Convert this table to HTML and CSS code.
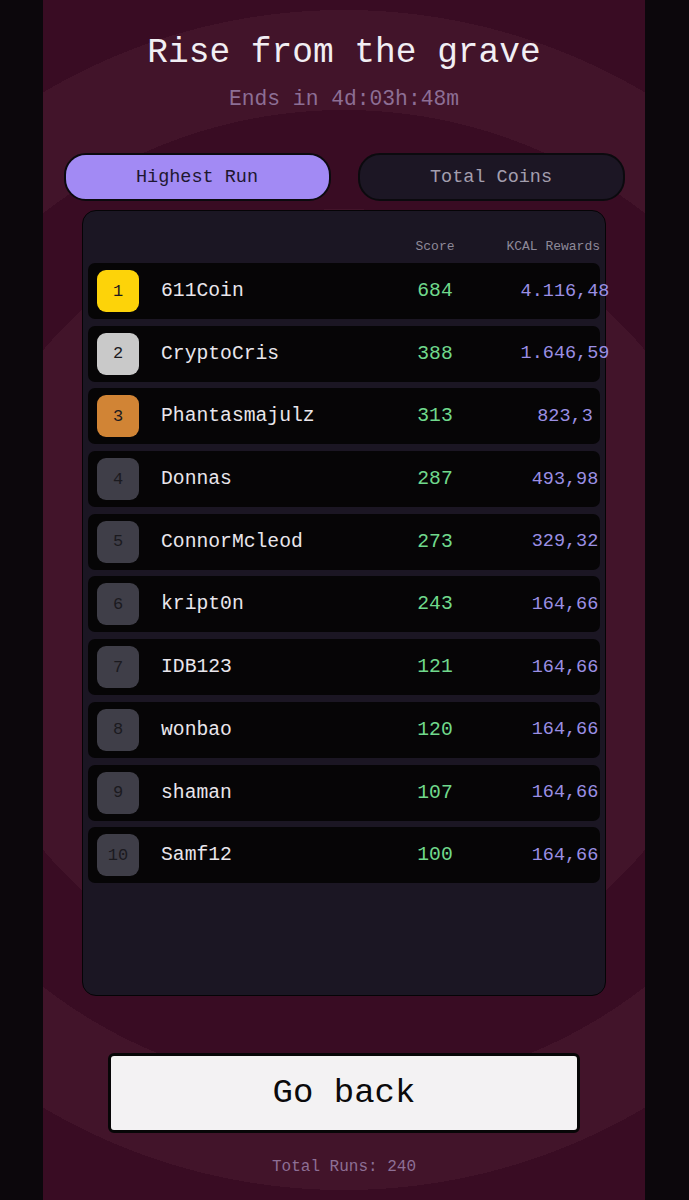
FILE: index.html
```html
<!DOCTYPE html>
<html>
<head>
<meta charset="utf-8">
<link rel="stylesheet" href="styles.css">
</head>
<body>
<main class="panel">
  <h1 class="title">Rise from the grave</h1>
  <p class="subtitle">Ends in 4d:03h:48m</p>
  <div class="tabs">
    <button class="tab tab-active">Highest Run</button>
    <button class="tab">Total Coins</button>
  </div>
  <section class="board">
    <div class="board-head">
      <span></span><span></span>
      <span class="h-score">Score</span>
      <span class="h-reward">KCAL Rewards</span>
    </div>
    <div class="rows">
      <div class="row"><span class="rank gold">1</span><span class="name">611Coin</span><span class="score">684</span><span class="reward">4.116,48</span></div>
      <div class="row"><span class="rank silver">2</span><span class="name">CryptoCris</span><span class="score">388</span><span class="reward">1.646,59</span></div>
      <div class="row"><span class="rank bronze">3</span><span class="name">Phantasmajulz</span><span class="score">313</span><span class="reward">823,3</span></div>
      <div class="row"><span class="rank">4</span><span class="name">Donnas</span><span class="score">287</span><span class="reward">493,98</span></div>
      <div class="row"><span class="rank">5</span><span class="name">ConnorMcleod</span><span class="score">273</span><span class="reward">329,32</span></div>
      <div class="row"><span class="rank">6</span><span class="name">kript0n</span><span class="score">243</span><span class="reward">164,66</span></div>
      <div class="row"><span class="rank">7</span><span class="name">IDB123</span><span class="score">121</span><span class="reward">164,66</span></div>
      <div class="row"><span class="rank">8</span><span class="name">wonbao</span><span class="score">120</span><span class="reward">164,66</span></div>
      <div class="row"><span class="rank">9</span><span class="name">shaman</span><span class="score">107</span><span class="reward">164,66</span></div>
      <div class="row"><span class="rank">10</span><span class="name">Samf12</span><span class="score">100</span><span class="reward">164,66</span></div>
    </div>
  </section>
  <button class="back">Go back</button>
  <p class="runs">Total Runs: 240</p>
</main>
</body>
</html>
```

FILE: styles.css
```css
* { box-sizing: border-box; }
html, body { margin: 0; padding: 0; }
body {
  background: #0c070c;
  font-family: "Liberation Mono", "Courier New", monospace;
  display: flex;
  justify-content: center;
  height: 1200px;
  overflow: hidden;
}
.panel {
  width: 602px;
  height: 1200px;
  margin-left: -1px;
  display: flex;
  flex-direction: column;
  align-items: center;
  background: radial-gradient(circle at 301px 600px,
    #42142a 0 391px,
    #390c23 391px 490px,
    #42142a 490px 590px,
    #390c23 590px);
}
.title {
  margin: 33px 0 0;
  font-size: 34.5px;
  line-height: 40px;
  font-weight: normal;
  color: #f1eef3;
}
.subtitle {
  margin: 13px 0 0;
  font-size: 21.3px;
  line-height: 26px;
  color: #8d6f95;
}
.tabs {
  margin-top: 41px;
  display: flex;
  gap: 27px;
}
.tab {
  width: 267px;
  height: 48px;
  border: 2px solid #0b0a0e;
  border-radius: 22px;
  background: #1c1624;
  color: #a39eae;
  font-family: inherit;
  font-size: 18.5px;
  padding: 0;
}
.tab-active {
  background: #a28af4;
  color: #1e1730;
}
.board {
  margin-top: 9px;
  width: 524px;
  height: 786px;
  background: #1b1623;
  border: 1px solid #050406;
  border-radius: 14px;
  padding: 28px 5px 0;
}
.board-head, .row {
  display: grid;
  grid-template-columns: 42px 1fr 70px 130px;
  align-items: center;
  padding-left: 9px;
}
.board-head {
  font-size: 13px;
  line-height: 16px;
  color: #8e8999;
  height: 16px;
  margin-bottom: 8px;
}
.h-score { text-align: center; }
.h-reward { text-align: right; }
.rows {
  display: flex;
  flex-direction: column;
  gap: 6.7px;
}
.row {
  height: 56px;
  background: #060506;
  border-radius: 7px;
  font-size: 19.7px;
}
.rank {
  width: 42px;
  height: 42px;
  border-radius: 9px;
  background: #3f3e48;
  color: #1b1a1f;
  font-size: 17px;
  display: flex;
  align-items: center;
  justify-content: center;
}
.rank.gold { background: #fdd309; }
.rank.silver { background: #c9c9c9; }
.rank.bronze { background: #d18435; }
.name {
  padding-left: 22px;
  color: #e9e6ec;
  white-space: nowrap;
}
.score {
  text-align: center;
  color: #70d98c;
}
.reward {
  padding-left: 60px;
  display: flex;
  justify-content: center;
  color: #9b8fe4;
  font-size: 18.5px;
  white-space: nowrap;
}
.back {
  margin-top: 57px;
  width: 472px;
  height: 80px;
  background: #f3f2f3;
  border: 3px solid #070607;
  border-radius: 6px;
  font-family: inherit;
  font-size: 34px;
  color: #0b0a0b;
  padding: 0;
}
.runs {
  margin: 25px 0 0;
  font-size: 16px;
  line-height: 18px;
  color: #8d6f95;
}
```
